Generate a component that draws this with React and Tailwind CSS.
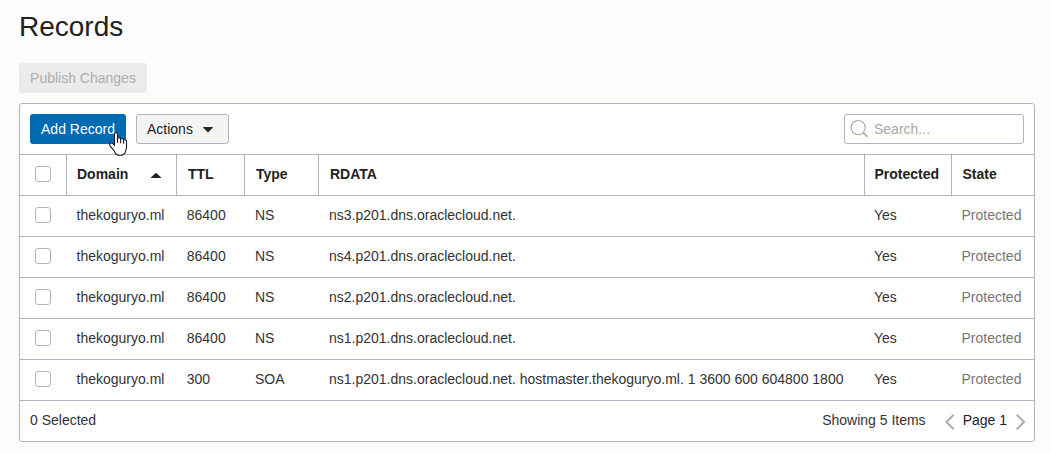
const GRID = 'grid grid-cols-[47px_110px_68px_74px_546px_87px_82px]';

const records = [
  { ttl: '86400', type: 'NS', rdata: 'ns3.p201.dns.oraclecloud.net.' },
  { ttl: '86400', type: 'NS', rdata: 'ns4.p201.dns.oraclecloud.net.' },
  { ttl: '86400', type: 'NS', rdata: 'ns2.p201.dns.oraclecloud.net.' },
  { ttl: '86400', type: 'NS', rdata: 'ns1.p201.dns.oraclecloud.net.' },
  {
    ttl: '300',
    type: 'SOA',
    rdata: 'ns1.p201.dns.oraclecloud.net. hostmaster.thekoguryo.ml. 1 3600 600 604800 1800',
  },
];

function Checkbox({ label }) {
  return (
    <input
      type="checkbox"
      aria-label={label}
      className="block size-4 appearance-none rounded-[3px] border border-[#aeb5c0] bg-white"
    />
  );
}

function HeaderCell({ children }) {
  return (
    <div className="flex h-full items-center border-r border-[#aeb5c0] pb-0.5 pl-[11px]">
      {children}
    </div>
  );
}

function HandCursor() {
  return (
    <svg
      className="pointer-events-none absolute left-[79px] top-[18px]"
      width="19"
      height="24"
      viewBox="0 0 19 24"
      fill="none"
    >
      <path
        d="M5.5 13.5V2.2C5.5 .2 8.5 .2 8.5 2.2V6.6C9 5.4 11.3 5.4 11.6 7C12.2 6 14.3 6.2 14.6 7.8C15.6 7.2 17.5 7.8 17.5 9.4V15.5C17.5 17.4 16.6 18.4 16.3 20.2C15.3 22.4 13.2 23.3 11 23.3C8.4 23.3 6.6 22.2 5.9 20.2C4.8 17.8 2.4 16 1 13.8C0 11.8 1.8 10.2 3.6 11.4Z"
        fill="white"
        stroke="#171725"
        strokeWidth="1.1"
        strokeLinejoin="round"
      />
      <path d="M8.5 6.6V11M11.6 7V11.3M14.6 7.8V11.8" stroke="#171725" strokeWidth="1.1" />
    </svg>
  );
}

export default function App() {
  return (
    <main className="h-[453px] w-[1051px] overflow-hidden bg-[#fcfcfc] pl-[19px] pt-2 font-['Liberation_Sans',Arial,sans-serif] text-sm text-[#333]">
      <h1 className="h-[55px] text-[28px] leading-[38px] text-[#222]">Records</h1>
      <button className="block h-[30px] w-32 rounded-[3px] bg-[#ebebeb] text-sm text-[#adadad]">
        Publish Changes
      </button>

      <section className="mt-2.5 w-[1016px] rounded-[3px] border border-[#aeb5c0] bg-white">
        <div className="flex h-[51px] items-center border-b border-[#aeb5c0] px-2.5">
          <div className="relative">
            <button className="block h-[30px] w-24 rounded-[3px] bg-[#006bb0] text-white">
              Add Record
            </button>
            <HandCursor />
          </div>
          <button className="ml-2.5 flex h-[30px] w-[93px] items-center rounded-[3px] border border-[#aeb5c0] bg-[#f4f4f4] pl-2.5 text-[#222]">
            Actions
            <svg className="ml-2.5 mt-0.5" width="10" height="6" viewBox="0 0 10 6">
              <path d="M0 .5Q0 0 .6 0H9.4Q10 0 10 .5L5.5 5Q5 5.5 4.5 5Z" fill="#222" />
            </svg>
          </button>
          <label className="ml-auto flex h-[30px] w-[180px] items-center rounded-[3px] border border-[#aeb5c0] bg-white pl-[5px]">
            <svg className="mb-px" width="19" height="19" viewBox="0 0 19 19" fill="none" stroke="#a8a8a8" strokeWidth="1.2">
              <circle cx="8.2" cy="8.6" r="7.1" />
              <path d="M13.2 13.6L17.2 17.6" strokeWidth="1.5" />
            </svg>
            <input
              className="ml-[5px] w-[140px] bg-transparent outline-none placeholder:text-[#a9a9a9]"
              placeholder="Search..."
            />
          </label>
        </div>

        <div className={`${GRID} h-[41px] border-b border-[#aeb5c0] font-bold text-[#222]`}>
          <div className="flex items-center border-r border-[#aeb5c0] pb-0.5 pl-[15px]">
            <Checkbox label="Select all" />
          </div>
          <div className="flex items-center border-r border-[#aeb5c0] pb-0.5 pl-2.5">
            Domain
            <svg className="ml-auto mr-[15px] mt-0.5" width="10" height="5" viewBox="0 0 10 5">
              <path d="M0 5Q0 4.5 .4 4.1L4.4 .3Q5 -.2 5.6 .3L9.6 4.1Q10 4.5 10 5Z" fill="#222" />
            </svg>
          </div>
          <HeaderCell>TTL</HeaderCell>
          <HeaderCell>Type</HeaderCell>
          <HeaderCell>RDATA</HeaderCell>
          <div className="flex items-center border-r border-[#aeb5c0] pb-0.5 pl-[9.5px]">
            Protected
          </div>
          <div className="flex items-center pb-0.5 pl-[10.5px]">State</div>
        </div>

        {records.map((record) => (
          <div
            key={record.rdata}
            className={`${GRID} h-[41px] items-center border-b border-[#aeb5c0] pb-0.5`}
          >
            <div className="pl-[15px]">
              <Checkbox label={record.rdata} />
            </div>
            <div className="pl-[9.5px]">thekoguryo.ml</div>
            <div className="pl-[9.75px]">{record.ttl}</div>
            <div className="pl-2.5">{record.type}</div>
            <div className="whitespace-nowrap pl-2.5">{record.rdata}</div>
            <div className="pl-[9px]">Yes</div>
            <div className="pl-[9.5px] text-[#757575]">Protected</div>
          </div>
        ))}

        <footer className="flex h-10 items-center pl-2.5 pr-2">
          <span className="pb-0.5">0 Selected</span>
          <span className="ml-auto pb-0.5">Showing 5 Items</span>
          <button aria-label="Previous page" className="ml-[19px] mt-px">
            <svg width="10" height="16" viewBox="0 0 10 16" fill="none" stroke="#adadad" strokeWidth="2">
              <path d="M8.7 .7L1.4 8L8.7 15.3" />
            </svg>
          </button>
          <span className="ml-2 pb-0.5 text-[#222]">Page 1</span>
          <button aria-label="Next page" className="ml-[9px] mt-px">
            <svg width="10" height="16" viewBox="0 0 10 16" fill="none" stroke="#adadad" strokeWidth="2">
              <path d="M.7 .7L8 8L.7 15.3" />
            </svg>
          </button>
        </footer>
      </section>
    </main>
  );
}
